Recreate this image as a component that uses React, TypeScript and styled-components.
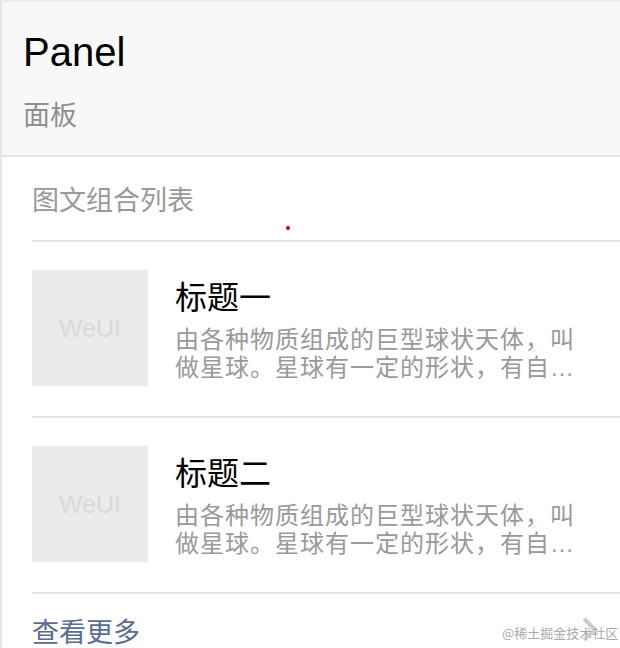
import React from 'react'
import styled, { createGlobalStyle } from 'styled-components'

interface MediaItem {
    title: string
    desc: string
}

const items: MediaItem[] = [
    { title: '标题一', desc: '由各种物质组成的巨型球状天体，叫做星球。星球有一定的形状，有自己的运行轨道。' },
    { title: '标题二', desc: '由各种物质组成的巨型球状天体，叫做星球。星球有一定的形状，有自己的运行轨道。' },
]

const GlobalStyle = createGlobalStyle`
    html, body {
        margin: 0;
        padding: 0;
        background: #fff;
        overflow: hidden;
    }
    body {
        font-family: "Liberation Sans", "Noto Sans CJK SC", sans-serif;
    }
`

const App: React.FC = () => {
    return (
        <Page>
            <GlobalStyle />
            <PageHeader>
                <PageTitle>Panel</PageTitle>
                <PageDesc>面板</PageDesc>
            </PageHeader>
            <Panel>
                <PanelHead>
                    图文组合列表
                    <Dot />
                </PanelHead>
                {items.map((item, index) => (
                    <MediaBox key={index}>
                        <Thumb>WeUI</Thumb>
                        <MediaBody>
                            <MediaTitle>{item.title}</MediaTitle>
                            <MediaDesc>{item.desc}</MediaDesc>
                        </MediaBody>
                    </MediaBox>
                ))}
                <PanelFoot>
                    <MoreLink>查看更多</MoreLink>
                    <Arrow />
                    <Watermark>@稀土掘金技术社区</Watermark>
                </PanelFoot>
            </Panel>
        </Page>
    )
}

const Page = styled.div`
    width: 640px;
    height: 648px;
    border-left: 2px solid #e6e6e6;
    border-top: 2px solid #ececec;
    box-sizing: border-box;
`

const PageHeader = styled.div`
    background: #f8f8f8;
    padding: 26px 0 25px 21px;
    border-bottom: 2px solid #e5e5e5;
`

const PageTitle = styled.div`
    font-family: "Liberation Sans", sans-serif;
    font-size: 40px;
    line-height: 48px;
    color: #000;
`

const PageDesc = styled.div`
    margin-top: 22px;
    font-family: "Noto Sans CJK SC", sans-serif;
    font-size: 27px;
    line-height: 32px;
    color: #8f8f8f;
`

const Panel = styled.div`
    padding-left: 30px;
`

const PanelHead = styled.div`
    position: relative;
    padding: 26px 0 25px;
    font-family: "Noto Sans CJK SC", sans-serif;
    font-size: 27px;
    line-height: 32px;
    color: #999;
`

const Dot = styled.span`
    position: absolute;
    left: 254px;
    top: 69px;
    width: 4px;
    height: 4px;
    border-radius: 50%;
    background: #d0021b;
`

const MediaBox = styled.div`
    display: flex;
    align-items: center;
    padding: 28px 24px 30px 0;
    border-top: 2px solid #e5e5e5;
`

const Thumb = styled.div`
    flex: none;
    width: 116px;
    height: 116px;
    margin-right: 27px;
    display: flex;
    align-items: center;
    justify-content: center;
    background: #ebebeb;
    color: #dadada;
    font-family: "Liberation Sans", sans-serif;
    font-size: 25px;
`

const MediaBody = styled.div`
    flex: 1;
    min-width: 0;
`

const MediaTitle = styled.div`
    font-family: "Noto Sans CJK SC", sans-serif;
    font-size: 32px;
    line-height: 40px;
    color: #000;
    margin-bottom: 11px;
`

const MediaDesc = styled.div`
    width: 412px;
    font-family: "Liberation Sans", "Noto Sans CJK SC", sans-serif;
    font-size: 24px;
    line-height: 28px;
    letter-spacing: 1px;
    color: #999;
    text-spacing-trim: space-all;
    font-variant-east-asian: full-width;
    display: -webkit-box;
    -webkit-box-orient: vertical;
    -webkit-line-clamp: 2;
    overflow: hidden;
`

const PanelFoot = styled.div`
    position: relative;
    display: flex;
    align-items: center;
    justify-content: space-between;
    padding: 21px 46px 0 0;
    border-top: 2px solid #e5e5e5;
`

const MoreLink = styled.a`
    font-family: "Noto Sans CJK SC", sans-serif;
    font-size: 27px;
    line-height: 32px;
    color: #586c94;
`

const Arrow = styled.span`
    width: 13px;
    height: 13px;
    margin-top: -4px;
    border-top: 4px solid #c8c8cd;
    border-right: 4px solid #c8c8cd;
    transform: rotate(45deg);
`

const Watermark = styled.span`
    position: absolute;
    left: 470px;
    top: 30px;
    font-family: "Noto Sans CJK SC", sans-serif;
    font-size: 13px;
    line-height: 18px;
    color: #aaa;
    text-shadow: 0 0 2px #fff;
    white-space: nowrap;
`

export default App
